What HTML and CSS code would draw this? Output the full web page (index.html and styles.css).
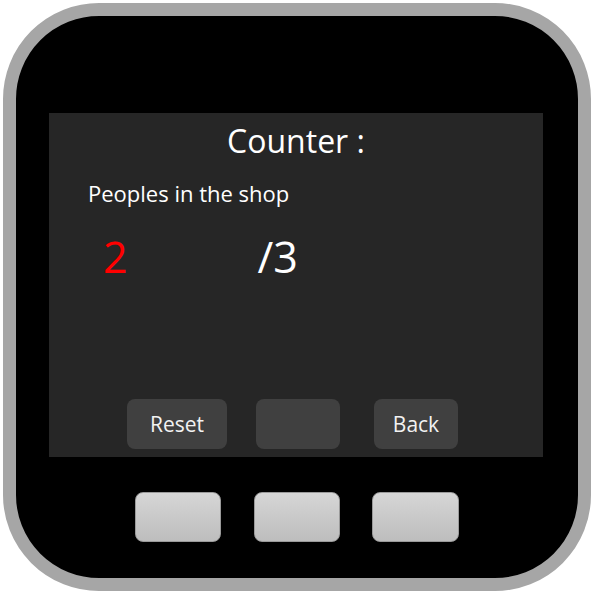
FILE: index.html
```html
<!DOCTYPE html>
<html>
<head>
<meta charset="utf-8">
<link rel="stylesheet" href="styles.css">
</head>
<body>
<div class="device">
  <div class="screen">
    <div class="title">Counter :</div>
    <div class="subtitle">Peoples in the shop</div>
    <div class="counts">
      <span class="current">2</span>
      <span class="max">/3</span>
    </div>
    <div class="soft-buttons">
      <div class="soft reset">Reset</div>
      <div class="soft middle"></div>
      <div class="soft back">Back</div>
    </div>
  </div>
  <div class="hard-buttons">
    <div class="hard"></div>
    <div class="hard"></div>
    <div class="hard"></div>
  </div>
</div>
</body>
</html>
```
FILE: styles.css
```css
html, body {
  margin: 0;
  padding: 0;
  background: #ffffff;
}
body {
  width: 594px;
  height: 594px;
  font-family: "Open Sans", "DejaVu Sans", sans-serif;
}
.device {
  box-sizing: border-box;
  margin: 3px 0 0 3px;
  width: 588px;
  height: 588px;
  border: 13px solid #a6a6a6;
  border-radius: 96px;
  background: #000000;
  padding: 97px 0 0 33px;
  display: flex;
  flex-direction: column;
}
.screen {
  width: 494px;
  height: 344px;
  background: #262626;
  display: flex;
  flex-direction: column;
  color: #ffffff;
}
.title {
  text-align: center;
  font-size: 32px;
  line-height: 44px;
  margin-top: 6px;
}
.subtitle {
  font-size: 22px;
  line-height: 30px;
  margin: 15px 0 0 39px;
}
.counts {
  display: flex;
  align-items: baseline;
  margin-top: 22px;
  font-size: 43px;
  line-height: 54px;
}
.current {
  color: #ff0000;
  margin-left: 54px;
}
.max {
  margin-left: 130px;
}
.soft-buttons {
  display: flex;
  margin-top: auto;
  margin-bottom: 8px;
  padding-left: 78px;
}
.soft {
  height: 50px;
  border-radius: 8px;
  background: #404040;
  display: flex;
  align-items: center;
  justify-content: center;
  font-size: 21px;
  color: #f2f2f2;
}
.reset { width: 100px; }
.middle { width: 84px; margin-left: 29px; }
.back { width: 84px; margin-left: 34px; }
.hard-buttons {
  display: flex;
  margin-top: 35px;
  margin-left: 86px;
  gap: 33px;
}
.hard {
  box-sizing: border-box;
  width: 86px;
  height: 50px;
  border-radius: 8px;
  border: 1px solid #9a9a9a;
  background: linear-gradient(#d6d6d6, #bdbdbd);
}
.hard:nth-child(3) { margin-left: -1px; width: 87px; }
```
